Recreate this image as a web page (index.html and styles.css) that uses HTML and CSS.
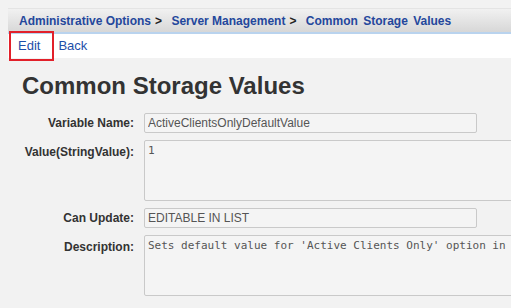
FILE: index.html
```html
<!DOCTYPE html>
<html lang="en">
  <head>
    <meta charset="UTF-8" />
    <title>Common Storage Values</title>
    <link rel="stylesheet" href="styles.css">
  </head>
  <body>
    <div class="breadcrumb">
      <a href="#">Administrative Options</a><span class="sep">&gt;</span>
      <a href="#">Server Management</a><span class="sep">&gt;</span>
      <a href="#" class="current">Common Storage Values</a>
    </div>

    <div class="toolbar">
      <a href="#">Edit</a>
      <a href="#">Back</a>
      <span class="highlight"></span>
    </div>

    <h1>Common Storage Values</h1>

    <!-- Fiche de la valeur -->
    <form class="details">
      <label class="lbl">Variable Name:</label>
      <input type="text" value="ActiveClientsOnlyDefaultValue" readonly />

      <label class="lbl top">Value(StringValue):</label>
      <textarea readonly>1</textarea>

      <label class="lbl">Can Update:</label>
      <input type="text" value="EDITABLE IN LIST" readonly />

      <label class="lbl top">Description:</label>
      <textarea readonly>Sets default value for 'Active Clients Only' option in reports</textarea>
    </form>
  </body>
</html>
```

FILE: styles.css
```css
:root {
  --crumb-blue: #24479c;
  --link-blue: #1d4ea9;
  --text-dark: #333;
  --field-border: #c9c9c9;
  --page-bg: #f2f2f2;
}

html,
body {
  overflow: hidden;
}

body {
  margin: 8px 0 0 8px;
  background: var(--page-bg);
  font-family: "Liberation Sans", Arial, sans-serif;
  color: var(--text-dark);
}

a {
  text-decoration: none;
}

.breadcrumb {
  box-sizing: border-box;
  height: 26px;
  line-height: 24px;
  padding-left: 11px;
  background: linear-gradient(to bottom, #f1f1f1, #d7d7d7);
  border-top: 1px solid #e4e4e4;
  border-bottom: 2px solid #b9d3ee;
  font-size: 12px;
  font-weight: bold;
  white-space: nowrap;
}

.breadcrumb a {
  color: var(--crumb-blue);
}

.breadcrumb .current {
  word-spacing: 2px;
}

.breadcrumb .sep {
  color: #222;
  margin: 0 6px 0 4px;
}

.toolbar {
  position: relative;
  display: flex;
  gap: 18px;
  height: 24px;
  line-height: 24px;
  padding-left: 10px;
  background: #fff;
  font-size: 13px;
}

.toolbar a {
  color: var(--link-blue);
}

/* Cadre rouge autour du lien Edit */
.highlight {
  position: absolute;
  left: 1px;
  top: -3px;
  width: 45px;
  height: 30px;
  border: 2px solid #e2202a;
  box-sizing: border-box;
}

h1 {
  margin: 14px 0 0 14px;
  font-size: 24px;
  line-height: 28px;
  font-weight: bold;
  color: #333;
}

.details {
  display: grid;
  grid-template-columns: 126px auto;
  column-gap: 10px;
  row-gap: 7px;
  margin-top: 13px;
  align-items: center;
}

.lbl {
  text-align: right;
  font-size: 12px;
  line-height: 14px;
  font-weight: bold;
  color: var(--text-dark);
  white-space: nowrap;
}

.lbl.top {
  align-self: start;
  padding-top: 5px;
}

.details input,
.details textarea {
  box-sizing: border-box;
  margin: 0;
  border: 1px solid var(--field-border);
  border-radius: 2px;
  background: #f4f4f4;
  color: #555;
  outline: none;
}

.details input {
  width: 333px;
  height: 20px;
  padding: 0 3px;
  font-family: "Liberation Sans", Arial, sans-serif;
  font-size: 12px;
}

.details textarea {
  width: 420px;
  height: 61px;
  padding: 3px;
  resize: none;
  overflow: hidden;
  white-space: pre;
  font-family: "DejaVu Sans Mono", "Liberation Mono", monospace;
  font-size: 11px;
  line-height: 14px;
}
```
